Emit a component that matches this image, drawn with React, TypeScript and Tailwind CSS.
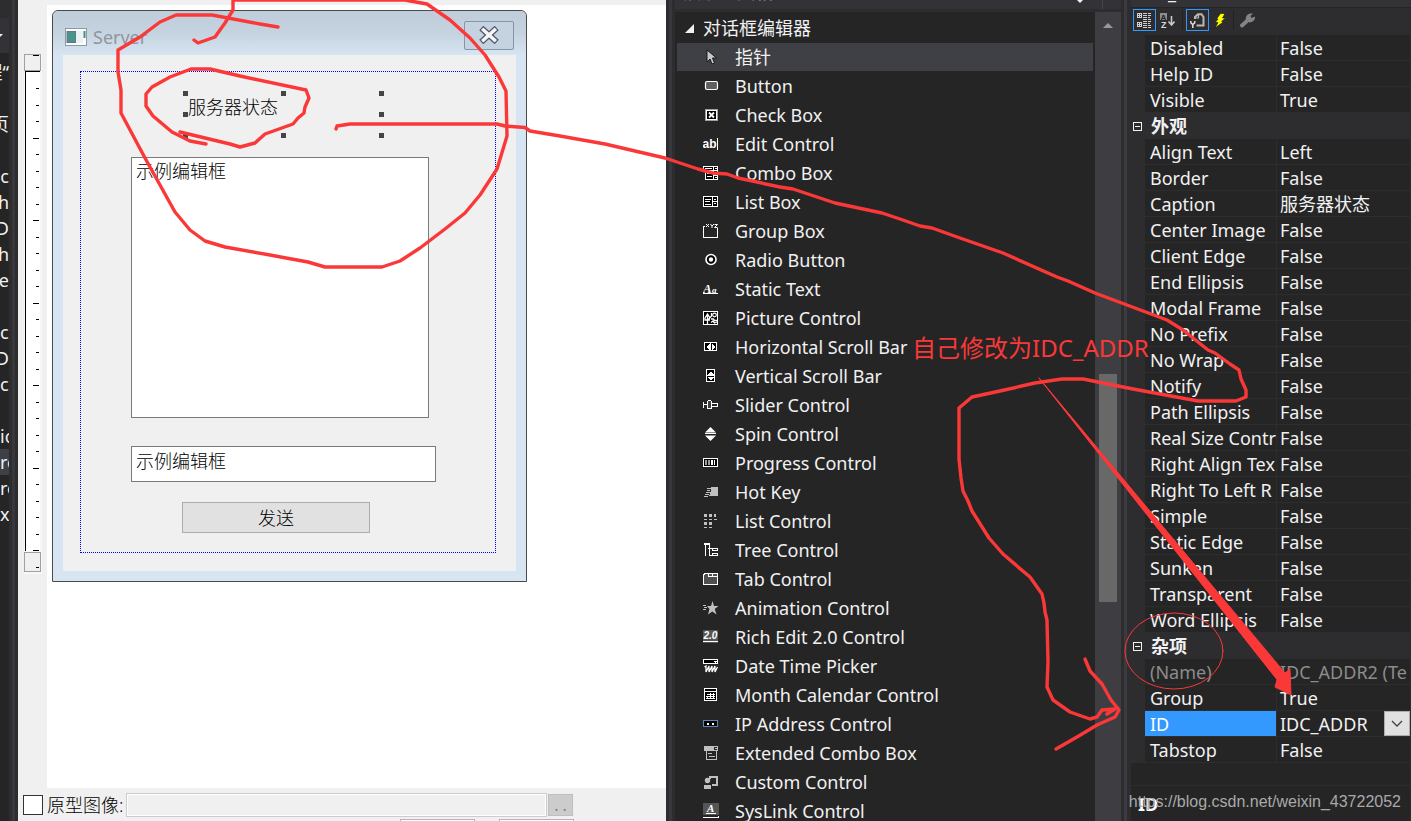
import React from "react";

type IconProps = { children: React.ReactNode };

function ToolIcon({ children }: IconProps) {
  return (
    <svg viewBox="0 0 16 16" className="h-4 w-4 shrink-0" shapeRendering="crispEdges" fill="none" aria-hidden="true">
      {children}
    </svg>
  );
}

const W = "#ffffff";
const G = "#c0c0c0";

const tools: { label: string; icon: React.ReactNode }[] = [
  {
    label: "指针",
    icon: <path d="M4 1v12l3-3 2 5 2.500-1-2-5h4z" fill="#c8c8c8" stroke="#1a1a1a" shapeRendering="auto" />,
  },
  {
    label: "Button",
    icon: <rect x="2.5" y="3.5" width="12" height="8" rx="1.5" fill="#606060" stroke={W} strokeWidth="1.2" shapeRendering="auto" />,
  },
  {
    label: "Check Box",
    icon: (
      <>
        <rect x="2.5" y="2.5" width="12" height="11" fill="#000" stroke="#a0a0a0" />
        <rect x="3.5" y="3.5" width="10" height="9" stroke={W} />
        <path d="M6 5.500l5 5M11 5.500l-5 5" stroke={W} strokeWidth="1.8" shapeRendering="auto" />
      </>
    ),
  },
  {
    label: "Edit Control",
    icon: (
      <>
        <text x="-0.5" y="12" fontSize="12" fontWeight="700" fontFamily="Liberation Sans, sans-serif" fill={W}>ab</text>
        <path d="M14.500 2v12" stroke={W} />
      </>
    ),
  },
  {
    label: "Combo Box",
    icon: (
      <>
        <path d="M0.5 1.5h14v4h-14zM2.5 5.5h12v9h-12z" stroke={W} fill="#000" />
        <path d="M10.5 1v14M4 8.5h5M4 11.5h5M2 3.5h7M11 10.5h4" stroke={W} />
        <path d="M11.5 3h3l-1.5 2zM11.5 9h3l-1.5-2zM11.5 12h3l-1.5 2z" fill={W} />
      </>
    ),
  },
  {
    label: "List Box",
    icon: (
      <>
        <path d="M0.5 2.5h14v10h-14z" stroke={W} fill="#000" />
        <path d="M9.5 3v10M2 5.5h6M2 7.5h5M2 10.5h6M10 7.5h5" stroke={W} />
        <path d="M10.5 6h3l-1.5-2zM10.5 9h3l-1.5 2z" fill={W} />
      </>
    ),
  },
  {
    label: "Group Box",
    icon: (
      <>
        <path d="M2 3.500H0.500V14.500h14V5" stroke={W} />
        <path d="M3 1l3 3M6 1l-3 3M7.500 1l1.500 2v2M11 1l-2 2M11.500 1.500h3l-3 3h3" stroke={W} shapeRendering="auto" />
      </>
    ),
  },
  {
    label: "Radio Button",
    icon: (
      <g shapeRendering="auto">
        <circle cx="8" cy="7.500" r="5" fill="#000" stroke={W} strokeWidth="1.600" />
        <circle cx="8" cy="7.500" r="2.200" fill={W} />
      </g>
    ),
  },
  {
    label: "Static Text",
    icon: (
      <>
        <text x="0" y="12" fontSize="13" fontStyle="italic" fontWeight="700" fontFamily="Liberation Serif, serif" fill={W}>A</text>
        <text x="9" y="12" fontSize="9" fontStyle="italic" fontWeight="700" fontFamily="Liberation Serif, serif" fill={W}>a</text>
        <path d="M0 12.500h15" stroke={W} />
      </>
    ),
  },
  {
    label: "Picture Control",
    icon: (
      <g shapeRendering="auto">
        <rect x="0.500" y="1.500" width="14" height="13" fill="#000" stroke={W} />
        <path d="M4.500 4v10M2 8l2.500-4L7 8M2 8v2h5M8.500 3v3L5 10" stroke={W} strokeWidth="1.300" />
        <circle cx="11.500" cy="5" r="1.800" stroke={W} strokeWidth="1.200" />
        <path d="M8 9h2.500l1 1.500H14M8 12.500l2-1.500 1.500 2 2.500-1" stroke={W} strokeWidth="1.300" />
      </g>
    ),
  },
  {
    label: "Horizontal Scroll Bar",
    icon: (
      <>
        <rect x="1.500" y="3.500" width="12" height="8" fill="#000" stroke={W} />
        <path d="M7.500 4v8" stroke={W} />
        <path d="M6.500 5v6L3 8zM9 5v6l3.500-3z" fill={W} />
      </>
    ),
  },
  {
    label: "Vertical Scroll Bar",
    icon: (
      <>
        <rect x="3.500" y="1.500" width="8" height="12" fill="#000" stroke={W} />
        <path d="M4 7.500h8" stroke={W} />
        <path d="M5 6.500h6L8 3zM5 9h6l-3 3.500z" fill={W} />
      </>
    ),
  },
  {
    label: "Slider Control",
    icon: (
      <>
        <path d="M0.500 5v6M1 7.500h3M9 6.500h5.500v3H9" stroke={W} />
        <path d="M4.500 4.500l1-1h2l1 1v7h-4z" fill="#404040" stroke={W} />
      </>
    ),
  },
  {
    label: "Spin Control",
    icon: (
      <>
        <path d="M7.500 1l5.500 5.500H2zM2 9.500h11L7.500 15z" fill={W} shapeRendering="auto" />
        <path d="M2 7.500h11" stroke={W} />
      </>
    ),
  },
  {
    label: "Progress Control",
    icon: (
      <>
        <rect x="0.500" y="3.500" width="14" height="8" fill="#000" stroke={W} />
        <path d="M2 5h2v5H2zM5 5h2v5H5z" fill="#a0a0a0" />
        <path d="M8 5h2v5H8zM11 5h1v5h-1z" fill={W} />
      </>
    ),
  },
  {
    label: "Hot Key",
    icon: (
      <>
        <path d="M8 3h7v9H6l2-5z" fill={G} />
        <path d="M4 4.500h4M4 6.500h3M3 8.500h4M2 10.500h4M1 12.500h4" stroke={G} />
      </>
    ),
  },
  {
    label: "List Control",
    icon: (
      <>
        <path d="M1 1h3v3H1zM6 1h3v3H6zM11 1h2v3h-2zM1 9h3v3H1zM6 9h3v3H6z" fill={G} />
        <path d="M1 6.500h3M6 6.500h3M11 6.500h3M1 14.500h3M6 14.500h3" stroke={G} />
      </>
    ),
  },
  {
    label: "Tree Control",
    icon: (
      <>
        <path d="M1 2.500h6M2.500 3v10.500M6.500 2v11M1 1.500h6M5 6.500h5M6 13.500h3" stroke={W} />
        <path d="M9.500 6.500h5v2h-5zM9.500 11.500h5v2h-5z" stroke={W} />
      </>
    ),
  },
  {
    label: "Tab Control",
    icon: (
      <>
        <path d="M0.500 13.500v-9l1-2h13v11z" fill="#505050" stroke={W} />
        <path d="M5.500 2v3.500H15M9.500 2v3" stroke={W} />
      </>
    ),
  },
  {
    label: "Animation Control",
    icon: (
      <>
        <path d="M9.500 1l1.500 5h4.500l-3.800 3L13.500 14.500l-4.200-3L5 14.500 6.500 9 4 6h4z" fill={G} shapeRendering="auto" />
        <path d="M0 5.500h3M1 7.500h3M0 9.500h3" stroke={G} />
      </>
    ),
  },
  {
    label: "Rich Edit 2.0 Control",
    icon: (
      <>
        <rect x="0" y="1" width="15" height="13" fill="#555" />
        <text x="0.500" y="10" fontSize="10" fontStyle="italic" fontWeight="700" fontFamily="Liberation Sans, sans-serif" fill={W}>2.0</text>
        <path d="M0 12.500h15" stroke={W} />
      </>
    ),
  },
  {
    label: "Date Time Picker",
    icon: (
      <>
        <path d="M0.500 1.500h14v4h-14z" fill="#000" stroke={W} />
        <path d="M11 3h3l-1.500 2z" fill={W} />
        <path d="M1.500 9l1.500-1v6l3-6v6l3-6v6l3-6v6l2.500-5" stroke={W} strokeWidth="1.300" shapeRendering="auto" />
      </>
    ),
  },
  {
    label: "Month Calendar Control",
    icon: (
      <>
        <path d="M1.500 1.500h12v12h-12z" fill="#000" stroke={W} />
        <path d="M2 4.500h12M4 7.500h8M3 9.500h9M3 11.500h9M4.500 9v3M7.500 6v6M10.500 6v6" stroke={W} />
      </>
    ),
  },
  {
    label: "IP Address Control",
    icon: (
      <>
        <rect x="0.500" y="4.500" width="14" height="6" fill="#000" stroke="#5b87b8" />
        <path d="M4 7h2v2H4zM9 7h2v2H9z" fill={W} />
      </>
    ),
  },
  {
    label: "Extended Combo Box",
    icon: (
      <>
        <path d="M1.500 1.500h13v4h-13zM3.500 5.500h10v9h-10z" stroke={G} />
        <path d="M1 2h9v3H1z" fill={G} />
        <path d="M10.500 2v3M5 8.500h4M6 11.500h6M12 3.500h2" stroke={G} />
      </>
    ),
  },
  {
    label: "Custom Control",
    icon: (
      <>
        <path d="M6 2.500h7.500v8H9M7 2v3" stroke={G} strokeWidth="2" />
        <circle cx="4.500" cy="6.500" r="2.700" fill={G} shapeRendering="auto" />
        <path d="M1 11h7v4H1z" fill={G} />
      </>
    ),
  },
  {
    label: "SysLink Control",
    icon: (
      <>
        <rect x="0" y="0" width="16" height="12" fill="#555" />
        <text x="4" y="9" fontSize="11" fontStyle="italic" fontWeight="700" fontFamily="Liberation Serif, serif" fill={W}>A</text>
        <path d="M3 10.500h10M0 14.500h15.500V13" stroke={W} />
      </>
    ),
  },
];

type Prop = { name: string; value?: string; kind?: "group" | "dim" | "selected" };

const props: Prop[] = [
  { name: "Disabled", value: "False" },
  { name: "Help ID", value: "False" },
  { name: "Visible", value: "True" },
  { name: "外观", kind: "group" },
  { name: "Align Text", value: "Left" },
  { name: "Border", value: "False" },
  { name: "Caption", value: "服务器状态" },
  { name: "Center Image", value: "False" },
  { name: "Client Edge", value: "False" },
  { name: "End Ellipsis", value: "False" },
  { name: "Modal Frame", value: "False" },
  { name: "No Prefix", value: "False" },
  { name: "No Wrap", value: "False" },
  { name: "Notify", value: "False" },
  { name: "Path Ellipsis", value: "False" },
  { name: "Real Size Contr", value: "False" },
  { name: "Right Align Tex", value: "False" },
  { name: "Right To Left R", value: "False" },
  { name: "Simple", value: "False" },
  { name: "Static Edge", value: "False" },
  { name: "Sunken", value: "False" },
  { name: "Transparent", value: "False" },
  { name: "Word Ellipsis", value: "False" },
  { name: "杂项", kind: "group" },
  { name: "(Name)", value: "IDC_ADDR2 (Te", kind: "dim" },
  { name: "Group", value: "True" },
  { name: "ID", value: "IDC_ADDR", kind: "selected" },
  { name: "Tabstop", value: "False" },
];

const treeRows: { text: string; end?: boolean; on?: boolean }[] = [
  { text: "程“", end: true },
  { text: "" },
  { text: "页", end: true },
  { text: "" },
  { text: "c", end: true },
  { text: "h", end: true },
  { text: "D", end: true },
  { text: "h", end: true },
  { text: "ve", end: true },
  { text: "" },
  { text: "cp" },
  { text: "D", end: true },
  { text: "cp" },
  { text: "" },
  { text: "ic" },
  { text: "ro", on: true },
  { text: "ro" },
  { text: "xt" },
];

function TreeStrip() {
  return (
    <aside className="flex w-[18px] shrink-0 bg-[#2d2d30]">
      <div className="flex w-[9px] flex-col overflow-hidden bg-[#252526] text-[18px] leading-[26px] text-[#f1f1f1]">
        <div className="h-[18px] shrink-0 bg-[#2d2d30]" />
        <div className="flex h-[35px] shrink-0 items-center bg-[#333337]">
          <svg viewBox="0 0 4 4" className="h-1 w-1 shrink-0" aria-hidden="true">
            <path d="M0 0h3L0 3z" fill="#f1f1f1" />
          </svg>
        </div>
        <ul className="pt-[6px]">
          {treeRows.map((r, i) => (
            <li
              key={i}
              className={`flex h-[26px] overflow-hidden whitespace-nowrap ${r.end ? "justify-end" : ""} ${r.on ? "bg-[#3f3f46]" : ""}`}
            >
              {r.text}
            </li>
          ))}
        </ul>
      </div>
      <div className="ml-[3px] w-[3px] bg-[#37373c]" />
    </aside>
  );
}

function Ruler() {
  const ticks = Array.from({ length: 32 }, (_, i) => i).filter((i) => i !== 1);
  return (
    <svg viewBox="0 0 18 520" className="mt-[54px] ml-[6px] h-[520px] w-[18px] shrink-0" shapeRendering="crispEdges" aria-hidden="true">
      <path d="M0 0h18v520H0z" fill="#f7f7f7" />
      <path d="M1 17h15v480H1z" fill="#fff" />
      <path d="M0.500 0.500h16v16h-16zM0.500 498.500h16v19h-16z" fill="#f0f0f0" stroke="#a0a0a0" />
      <path d="M16 17.500H1.500V497" fill="none" stroke="#000" />
      {ticks.map((i) => (
        <rect key={i} x={i % 5 === 0 ? 9 : 12} y={Math.round(1 + i * 16.5)} width={i % 5 === 0 ? 6 : 3} height="1" fill="#000" />
      ))}
    </svg>
  );
}

function DialogWindow() {
  return (
    <section className="mt-[5px] ml-[5px] flex h-[572px] w-[475px] flex-col rounded-t-md border border-[#4a4a4a] bg-[#d7e4f2] px-[10px] pb-[10px]">
      <header className="-mx-[10px] flex h-[44px] shrink-0 items-center rounded-t-md bg-linear-to-b from-[#bfcddb] via-[#c5d3e1] to-[#d7e4f2] pl-3 pr-3">
        <svg viewBox="0 0 22 18" className="mt-2 h-[18px] w-[22px]" aria-hidden="true">
          <rect x="0.500" y="0.500" width="21" height="17" fill="#fdfdfd" stroke="#8d99a6" />
          <rect x="2" y="3.500" width="9" height="11" fill="#4b948d" stroke="#64758b" />
          <rect x="11" y="3" width="7" height="12" fill="#eef1f4" />
          <rect x="18.500" y="3" width="2" height="7" fill="#3f8f86" />
        </svg>
        <h1 className="mt-2 ml-[6px] flex-1 text-[18px] leading-6 text-[#8f959b]">Server</h1>
        <button aria-label="关闭" className="mt-1 flex h-[29px] w-[50px] items-center justify-center rounded-xs border border-[#8593ab] bg-[#c5d2e0]">
          <svg viewBox="0 0 20 18" className="h-[18px] w-5" aria-hidden="true">
            <path d="M4.500 4l11 10M15.500 4l-11 10" stroke="#4c566c" strokeWidth="6" strokeLinecap="square" />
            <path d="M4.500 4l11 10M15.500 4l-11 10" stroke="#f6f6f6" strokeWidth="3.600" strokeLinecap="square" />
          </svg>
        </button>
      </header>
      <div className="flex flex-1 bg-[#f0f0f0] pt-4 pr-5 pb-[18px] pl-[17px]">
        <form className="flex flex-1 flex-col items-start border border-dotted border-[#0000ff] pl-[50px] text-[18px] leading-6 font-light text-black" onSubmit={(e) => e.preventDefault()}>
          <div className="relative mt-[21px] ml-14 h-[42px] w-[196px]">
            <label htmlFor="log" className="block pl-px leading-7">服务器状态</label>
            <svg viewBox="0 0 202 47" className="absolute -top-[2px] -left-[4px] h-[47px] w-[202px]" fill="#454545" shapeRendering="crispEdges" aria-hidden="true">
              <path d="M0 0h5v5H0zM98 0h5v5h-5zM196 0h5v5h-5zM0 21h5v5H0zM196 21h5v5h-5zM0 42h5v5H0zM98 42h5v5h-5zM196 42h5v5h-5z" />
            </svg>
          </div>
          <textarea
            id="log"
            defaultValue="示例编辑框"
            className="mt-[22px] block h-[261px] w-[298px] resize-none border border-[#7a7a7a] bg-white px-1 py-px leading-6 outline-none"
          />
          <input
            aria-label="消息"
            defaultValue="示例编辑框"
            className="mt-7 h-9 w-[305px] border border-[#7a7a7a] bg-white px-1 pb-2 outline-none"
          />
          <button className="mt-5 ml-[51px] h-[31px] w-[188px] border border-[#adadad] bg-[#e1e1e1]">发送</button>
        </form>
      </div>
    </section>
  );
}

function Designer() {
  return (
    <main className="flex min-w-0 flex-1 flex-col bg-[#f0f0f0]">
      <div className="flex min-h-0 flex-1">
        <Ruler />
        <div className="mt-[5px] ml-[5px] flex-1 bg-white">
          <DialogWindow />
        </div>
      </div>
      <footer className="h-[33px] shrink-0 overflow-hidden pt-[5px] pl-[5px] text-[18px] leading-6 text-black">
        <div className="flex h-6 items-center">
          <input id="proto" type="checkbox" className="h-5 w-5 shrink-0 appearance-none border border-[#333] bg-white" />
          <label htmlFor="proto" className="ml-1 w-[79px] shrink-0 font-light whitespace-nowrap">原型图像:</label>
          <input aria-label="原型图像路径" disabled className="h-6 w-[421px] border border-[#cccccc] bg-[#f0f0f0] shadow-[inset_0_0_0_1px_white]" />
          <button aria-label="浏览" className="ml-px flex h-[22px] w-[25px] items-end justify-center overflow-hidden border border-[#bfbfbf] bg-[#cccccc] text-[#838383]">
            <span className="text-[16px] leading-5">. .</span>
          </button>
        </div>
        <div className="mt-[2px] ml-[377px] flex gap-6">
          <div className="h-3 w-[75px] border border-[#b5b5b5] bg-white" />
          <div className="h-3 w-[75px] border border-[#b5b5b5] bg-white" />
        </div>
      </footer>
    </main>
  );
}

function Toolbox() {
  return (
    <aside className="flex w-[465px] shrink-0 bg-[#2d2d30] pl-[3px]">
      <div className="w-[3px] bg-[#37373c]" />
      <div className="ml-[3px] flex min-w-0 flex-1 flex-col">
        <div className="mb-[3px] flex h-[9px] shrink-0 items-end justify-between overflow-hidden bg-[#333337] pl-2 text-[18px] leading-6 text-[#999999]">
          <span className="pb-[5px]">搜索工具箱</span>
          <div className="flex h-full w-[45px]">
            <svg viewBox="0 0 8 3" className="h-[3px] w-2" aria-hidden="true">
              <path d="M1 0h6L4 3z" fill="#f1f1f1" />
            </svg>
            <div className="ml-[18px] w-px bg-[#46464a]" />
          </div>
        </div>
        <div className="flex min-h-0 flex-1 overflow-hidden bg-[#252526] text-[18px] text-[#f1f1f1]">
          <div className="flex min-w-0 flex-1 flex-col gap-px pt-[2px] pr-[2px] pl-[2px]">
            <button className="flex h-7 shrink-0 items-center pl-2 text-left">
              <svg viewBox="0 0 9 9" className="h-[9px] w-[9px]" aria-hidden="true">
                <path d="M9 0v9H0z" fill="#f1f1f1" />
              </svg>
              <span className="ml-[9px]">对话框编辑器</span>
            </button>
            {tools.map((t, i) => (
              <button
                key={t.label}
                className={`flex h-7 shrink-0 items-center gap-4 pl-[26px] text-left whitespace-nowrap ${i === 0 ? "bg-[#3f3f46]" : ""}`}
              >
                <ToolIcon>{t.icon}</ToolIcon>
                <span>{t.label}</span>
              </button>
            ))}
          </div>
          <div className="flex w-[26px] shrink-0 flex-col items-center bg-[#3e3e42] pt-[11px]">
            <svg viewBox="0 0 10 5" className="h-[5px] w-[10px] shrink-0" aria-hidden="true">
              <path d="M5 0l5 5H0z" fill="#999999" />
            </svg>
            <div className="mt-[346px] h-[228px] w-[18px] shrink-0 bg-[#686868]" />
          </div>
        </div>
      </div>
      <div className="ml-[3px] w-[3px] bg-[#3a3a40]" />
      <div className="w-1" />
    </aside>
  );
}

function PropToolbar() {
  return (
    <div className="flex h-[24px] shrink-0 items-center pl-[2px]">
      <button aria-label="按分类顺序" className="flex h-[22px] w-[23px] items-center justify-center border border-[#3399ff]">
        <svg viewBox="0 0 15 15" className="h-[15px] w-[15px]" shapeRendering="crispEdges" fill="none" stroke="#d0d0d0" aria-hidden="true">
          <path d="M0.500 0.500h4v4h-4zM0.500 9.500h4v4h-4zM1 2.500h3M2.500 1v3M1 11.500h3M2.500 10v3" />
          <path d="M6 0.500h4M6 2.500h4M6 4.500h4M6 6.500h4M6 8.500h4M6 10.500h4M6 12.500h4M6 14.500h4M11 0.500h3M11 2.500h3M11 4.500h2M11 6.500h3M11 8.500h3M11 10.500h2M11 12.500h3M11 14.500h3" />
        </svg>
      </button>
      <button aria-label="字母顺序" className="ml-1 flex h-[22px] w-[15px] items-center">
        <svg viewBox="0 0 15 15" className="h-[15px] w-[15px]" aria-hidden="true">
          <rect width="7" height="7" fill="#8c8c8c" />
          <text x="0.500" y="6.500" fontSize="8" fontWeight="700" fontFamily="Liberation Sans, sans-serif" fill="#1e1e1e">A</text>
          <text x="1" y="14.500" fontSize="9" fontWeight="700" fontFamily="Liberation Sans, sans-serif" fill="#d8d8d8">Z</text>
          <path d="M11.500 3v9M8.500 8.500l3 3.500 3-3.500" fill="none" stroke="#c8c8c8" strokeWidth="1.600" />
        </svg>
      </button>
      <div className="ml-[7px] h-5 w-px bg-[#222224]" />
      <button aria-label="属性" className="ml-[3px] flex h-[22px] w-[23px] items-center justify-center border border-[#3399ff]">
        <svg viewBox="0 0 15 15" className="h-[15px] w-[15px]" fill="none" aria-hidden="true">
          <path d="M5 6V4L8 1.200h3.500L13.500 4v8.500H6.500" stroke="#b8b8b8" strokeWidth="2" />
          <path d="M8.500 2v3H5" stroke="#b8b8b8" strokeWidth="1.200" />
          <path d="M0.900 8v2l1.900 1.500L4.700 10V8M2.800 11v4" stroke="#e0e0e0" strokeWidth="1.500" />
        </svg>
      </button>
      <button aria-label="控件事件" className="ml-[5px] flex h-[22px] w-3 items-center">
        <svg viewBox="0 0 12 15" className="h-[15px] w-3" aria-hidden="true">
          <path d="M6.500 0.500H11L8.500 5H11.500L7.500 8.500H10L1 15l3-5.500H1.200L4 6H2.500z" fill="#ffff00" stroke="#111" strokeWidth="0.600" />
        </svg>
      </button>
      <div className="ml-[7px] h-5 w-px bg-[#222224]" />
      <button aria-label="属性页" className="ml-[6px] flex h-[22px] w-[15px] items-center">
        <svg viewBox="0 0 15 15" className="h-[15px] w-[15px]" fill="none" aria-hidden="true">
          <path d="M2 12.500l5.500-5" stroke="#848484" strokeWidth="3.800" strokeLinecap="round" />
          <path d="M11 0.500h2L10.500 3l1 2 3.500-1.500c0.500 3-2 6-5.500 6L6 7.500c-1-4 1.500-7 5-7z" fill="#848484" />
        </svg>
      </button>
    </div>
  );
}

function Minus() {
  return (
    <svg viewBox="0 0 9 9" className="ml-[2px] h-[9px] w-[9px]" shapeRendering="crispEdges" fill="none" stroke="#f1f1f1" aria-hidden="true">
      <path d="M0.500 0.500h8v8h-8zM2 4.500h5" />
    </svg>
  );
}

function Properties() {
  return (
    <aside className="flex w-[280px] shrink-0 flex-col overflow-hidden bg-[#2d2d30] text-[18px] text-[#f1f1f1]">
      <div className="flex h-[8px] shrink-0 items-end overflow-hidden border-b border-[#252526] bg-[#333337] pl-[37px] leading-6 text-[#f1f1f1]">
        <span className="pb-[3px]">_</span>
      </div>
      <PropToolbar />
      <table className="mt-[3px] w-full table-fixed leading-[27px]">
        <colgroup>
          <col className="w-[14px]" />
          <col className="w-[132px]" />
          <col />
        </colgroup>
        <tbody>
          {props.map((p) =>
            p.kind === "group" ? (
              <tr key={p.name} className="h-[26px]">
                <td className="p-0"><Minus /></td>
                <th colSpan={2} className="p-0 pl-[6px] text-left leading-[26px] font-bold">{p.name}</th>
              </tr>
            ) : (
              <tr key={p.name} className={`h-[26px] ${p.kind === "dim" ? "text-[#8c8c8c]" : ""}`}>
                <td className="p-0" />
                <th className="p-0 text-left font-normal">
                  <div className={`mr-px mb-px h-[25px] overflow-hidden pl-[5px] whitespace-nowrap ${p.kind === "selected" ? "bg-[#3399ff] text-white" : "bg-[#252526]"}`}>
                    {p.name}
                  </div>
                </th>
                <td className="p-0">
                  {p.kind === "selected" ? (
                    <div className="mr-px mb-px flex h-[25px] bg-[#252526] pl-[3px]">
                      <input aria-label={p.name} defaultValue={p.value} className="min-w-0 flex-1 bg-transparent pt-px outline-none" />
                      <button aria-label="展开" className="flex w-[26px] items-center justify-center border border-[#acacac] bg-[#e1e1e1]">
                        <svg viewBox="0 0 12 7" className="h-[7px] w-3" aria-hidden="true">
                          <path d="M1 1l5 5 5-5" fill="none" stroke="#404040" strokeWidth="1.300" />
                        </svg>
                      </button>
                    </div>
                  ) : (
                    <div className="mr-px mb-px h-[25px] overflow-hidden bg-[#252526] pl-[3px] whitespace-nowrap">{p.value}</div>
                  )}
                </td>
              </tr>
            ),
          )}
        </tbody>
      </table>
      <div className="mr-px h-[22px] shrink-0 bg-[#252526]" />
      <div className="mt-px mr-px flex-1 bg-[#252526] pt-[6px] pl-[7px] font-bold leading-6 text-white">ID</div>
    </aside>
  );
}

function Annotations() {
  return (
    <div className="pointer-events-none absolute inset-0">
      <svg viewBox="0 0 1411 821" className="absolute top-0 left-0 h-[821px] w-[1411px]" fill="none" stroke="#fb3838" strokeWidth="3.400" strokeLinecap="round" strokeLinejoin="round" aria-hidden="true">
        <path d="M278 27L260 24L212 15H176L160 22L140 37L118 50V72L121 90V113L145 158L175 212L190 230L205 241L225 247L270 255L308 262L325 267H382L400 261L420 248L445 229L465 213L480 195L497 169L507 136L506 91L499 77L485 55L470 38L450 20L427 4L405 0H233V10L225 23L215 37L198 43L194 40" />
        <path d="M206 144L190 141L172 132L153 116L146 106V94L152 87L170 77L191 69H210L240 76L306 90L309 98L305 107L304 113L298 118L293 124L265 134L255 143L240 147L230 144L205 138L180 132" />
        <path d="M336 129L337 126L350 124H497L505 126L525 127.500L530 131L560 136L605 144L665 158L698 169L713 173L727 174L738 178L780 187L793 189L835 203L882 213L900 219L920 226L932 228L960 238L1003 253L1057 277L1068 281L1095 293L1167 320L1183 330L1208 350L1215 353L1230 364L1239 370L1241 379L1246 390V397L1236 401H1198L1133 389L1083 379H1062L1035 383L1000 391L972 397L959 408V459L961 478L963 491L968 501L972 511L989 538L1003 554L1017 566L1030 577L1042 594L1044 603L1045 612L1047 620L1048 662L1047 687L1053 700L1070 712L1090 719L1097 717L1102 710L1115 709L1107 714" />
        <path d="M1085 659L1090 671L1102 684L1111 700L1119 710L1115 717L1097 725L1077 737L1056 749" />
        <path d="M1039 378L1285 673L1290 669L1291 695L1275 687L1277 680Z" fill="#fb3838" stroke="#fb3838" strokeWidth="1" />
        <ellipse cx="1174" cy="651" rx="49" ry="38" strokeWidth="1" />
      </svg>
      <p className="absolute top-[332px] left-[912px] text-[24px] leading-8 whitespace-nowrap text-[#fb3838]">自己修改为IDC_ADDR</p>
      <p className="absolute top-[790px] right-[10px] font-['Liberation_Sans',sans-serif] text-[16px] leading-6 whitespace-nowrap text-[#a9a9ab]">
        https://blog.csdn.net/weixin_43722052
      </p>
    </div>
  );
}

export default function App() {
  return (
    <div className="relative flex h-screen overflow-hidden bg-[#2d2d30] font-['Noto_Sans','Noto_Sans_CJK_SC',sans-serif]">
      <TreeStrip />
      <Designer />
      <Toolbox />
      <Properties />
      <Annotations />
    </div>
  );
}
